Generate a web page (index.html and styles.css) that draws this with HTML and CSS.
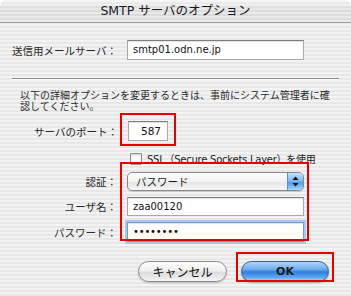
FILE: index.html
```html
<!DOCTYPE html>
<html lang="ja">
<head>
    <meta charset="UTF-8">
    <title>SMTP サーバのオプション</title>
    <link rel="stylesheet" href="styles.css">
</head>
<body>
    <div class="window">
        <div class="title-bar">SMTP サーバのオプション</div>

        <div class="content">
            <div class="row row-server">
                <label class="label">送信用メールサーバ：</label>
                <div class="field">smtp01.odn.ne.jp</div>
            </div>

            <div class="separator"></div>

            <p class="note">以下の詳細オプションを変更するときは、事前にシステム管理者に確認してください。</p>

            <div class="row row-port">
                <label class="label">サーバのポート：</label>
                <div class="field field-port">587</div>
            </div>

            <div class="row row-ssl">
                <span></span>
                <div class="check">
                    <span class="check-box"></span>
                    <span class="check-text">SSL（Secure Sockets Layer）を使用</span>
                </div>
            </div>

            <div class="row row-auth">
                <label class="label">認証：</label>
                <div class="popup">
                    <span class="popup-text">パスワード</span>
                    <span class="popup-arrows">
                        <svg width="7" height="11" viewBox="0 0 7 11">
                            <path d="M3.5 0.5 L6.5 4 L0.5 4 Z" fill="#111"/>
                            <path d="M3.5 10.5 L6.5 7 L0.5 7 Z" fill="#111"/>
                        </svg>
                    </span>
                </div>
            </div>

            <div class="row row-user">
                <label class="label">ユーザ名：</label>
                <div class="field">zaa00120</div>
            </div>

            <div class="row row-pass">
                <label class="label">パスワード：</label>
                <div class="field field-focus">&bull;&bull;&bull;&bull;&bull;&bull;&bull;&bull;</div>
            </div>

            <div class="buttons">
                <button type="button" class="btn btn-cancel">キャンセル</button>
                <button type="button" class="btn btn-ok">OK</button>
            </div>
        </div>

        <!-- red annotation boxes drawn over the dialog -->
        <div class="mark mark-port"></div>
        <div class="mark mark-auth"></div>
        <div class="mark mark-ok"></div>
    </div>
</body>
</html>
```

FILE: styles.css
```css
* {
    margin: 0;
    padding: 0;
    box-sizing: border-box;
}

body {
    width: 351px;
    height: 296px;
    background: #ffffff;
    font-family: "Noto Sans CJK JP", sans-serif;
    color: #1e1e1e;
    overflow: hidden;
}

.window {
    position: relative;
    width: 351px;
    height: 296px;
    border-radius: 7px 7px 0 0;
    overflow: hidden;
    background: repeating-linear-gradient(to bottom, #f3f3f3 0 2px, #e7e7e7 2px 4px);
}

.title-bar {
    height: 23px;
    line-height: 22px;
    text-align: center;
    font-family: "DejaVu Sans", "Noto Sans CJK JP", sans-serif;
    font-size: 12.5px;
    color: #1a1a1a;
    border-bottom: 1px solid #9a9a9a;
    background:
        linear-gradient(to bottom, rgba(255, 255, 255, 0.6), rgba(255, 255, 255, 0) 40%),
        repeating-linear-gradient(to bottom, #e9e9e9 0 2px, #dcdcdc 2px 4px);
    border-radius: 7px 7px 0 0;
}

.content {
    padding-top: 17px;
}

.row {
    display: grid;
    grid-template-columns: 117px 177px;
    column-gap: 10px;
    align-items: center;
}

.label {
    text-align: right;
    font-size: 10.5px;
    color: #2a2a2a;
    white-space: nowrap;
}

.field {
    height: 20px;
    padding-left: 5px;
    line-height: 18px;
    font-family: "DejaVu Sans", sans-serif;
    font-size: 10px;
    color: #111;
    background: #ffffff;
    border: 1px solid #a9a9a9;
    border-top-color: #7e7e7e;
    box-shadow: inset 0 1px 1px rgba(0, 0, 0, 0.12);
}

.field-port {
    width: 40px;
    padding-left: 0;
    padding-right: 6px;
    text-align: right;
    font-size: 10.5px;
}

.row-port {
    margin-top: 10px;
    grid-template-columns: 118px 40px;
}

.separator {
    margin: 18px 12px 0 12px;
    height: 2px;
    border-top: 1px solid #8c8c8c;
    border-bottom: 1px solid #fafafa;
}

.note {
    margin: 9px 0 0 20px;
    width: 315px;
    font-size: 10px;
    line-height: 11px;
    color: #2a2a2a;
}

.row-ssl {
    margin-top: 10px;
    grid-template-columns: 120px auto;
}

.check {
    display: flex;
    align-items: center;
    gap: 5px;
}

.check-box {
    width: 12px;
    height: 12px;
    background: linear-gradient(to bottom, #f4f4f4, #ffffff);
    border: 1px solid #8f8f8f;
    border-radius: 1px;
    box-shadow: inset 0 1px 2px rgba(0, 0, 0, 0.15);
}

.check-text {
    font-family: "DejaVu Sans", "Noto Sans CJK JP", sans-serif;
    font-size: 10px;
    letter-spacing: -0.25px;
    color: #1e1e1e;
}

.row-auth {
    margin-top: 6px;
}

.popup {
    display: flex;
    align-items: center;
    justify-content: space-between;
    height: 19px;
    border: 1px solid #8a8a8a;
    border-radius: 5px;
    background: linear-gradient(to bottom, #ffffff 0%, #f2f2f2 50%, #e4e4e4 51%, #f6f6f6 100%);
    box-shadow: 0 1px 1px rgba(0, 0, 0, 0.15);
    overflow: hidden;
}

.popup-text {
    padding-left: 8px;
    font-size: 10.5px;
    color: #1a1a1a;
}

.popup-arrows {
    display: flex;
    align-items: center;
    justify-content: center;
    width: 16px;
    height: 100%;
    border-left: 1px solid #5f8fc6;
    background: linear-gradient(to bottom, #c6e2fb 0%, #75b4f2 50%, #4b97e6 51%, #9fd4ff 100%);
}

.row-user {
    margin-top: 6px;
}

.row-user .field {
    height: 19px;
    line-height: 17px;
}

.row-pass {
    margin-top: 6px;
}

.field-focus {
    border-color: #6f9bd0;
    box-shadow: 0 0 0 2px #a9c8ec, inset 0 1px 1px rgba(0, 0, 0, 0.12);
    font-size: 10px;
    letter-spacing: -0.2px;
}

.buttons {
    display: flex;
    justify-content: flex-end;
    gap: 14px;
    margin-top: 19px;
    padding-right: 22px;
}

.btn {
    height: 21px;
    border-radius: 11px;
    font-family: "Noto Sans CJK JP", sans-serif;
    font-size: 12px;
    color: #111;
    cursor: pointer;
}

.btn-cancel {
    width: 89px;
    border: 1px solid #8c8c8c;
    background: linear-gradient(to bottom, #fdfdfd 0%, #f0f0f0 45%, #dcdcdc 55%, #f4f4f4 100%);
    box-shadow: 0 1px 2px rgba(0, 0, 0, 0.2);
}

.btn-ok {
    width: 88px;
    border: 1px solid #345d92;
    font-family: "DejaVu Sans", sans-serif;
    font-weight: bold;
    font-size: 11px;
    color: #1a1a1a;
    background: linear-gradient(to bottom, #b2d6f8 0%, #6aa9ec 40%, #2f7fdc 52%, #5aa5ee 80%, #a9dcff 100%);
    box-shadow: 0 1px 2px rgba(0, 0, 0, 0.3);
}

.mark {
    position: absolute;
    border: 2px solid #e60000;
}

.mark-port {
    left: 120px;
    top: 113px;
    width: 56px;
    height: 33px;
}

.mark-auth {
    left: 120px;
    top: 162px;
    width: 189px;
    height: 79px;
}

.mark-ok {
    left: 236px;
    top: 252px;
    width: 98px;
    height: 30px;
}
```
